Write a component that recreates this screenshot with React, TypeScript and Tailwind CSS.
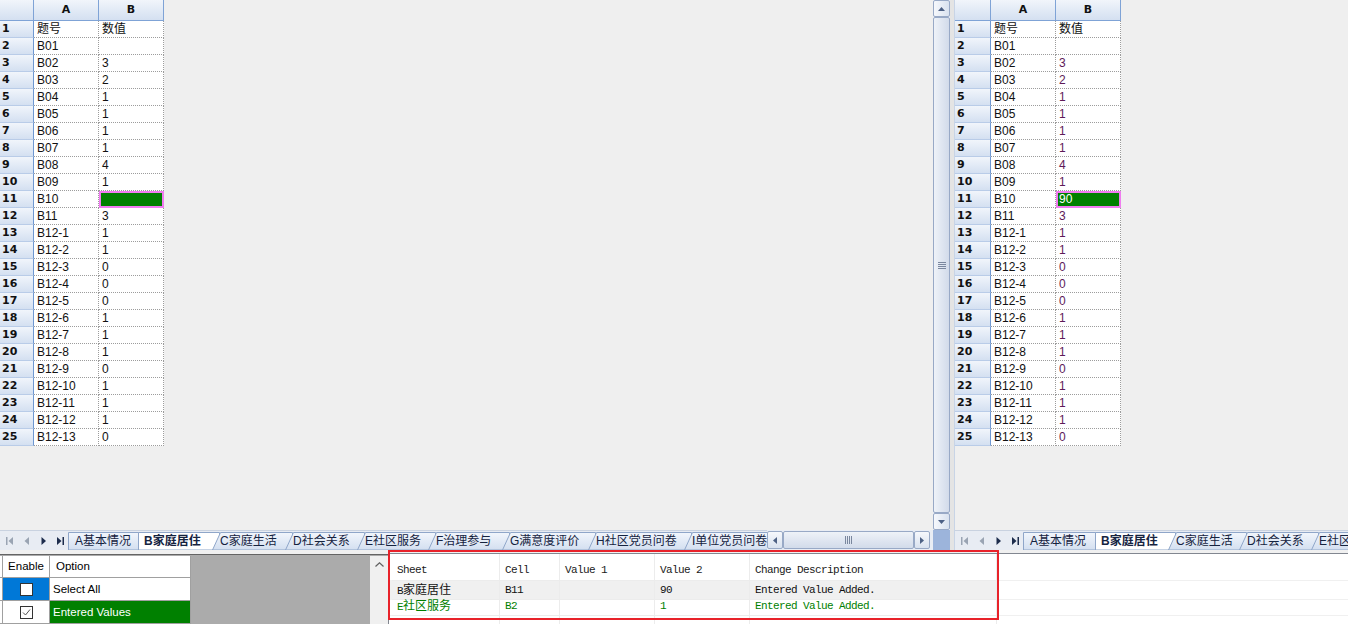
import React from "react";

const DATA: [string, string][] = [
  ["题号", "数值"], ["B01", ""], ["B02", "3"], ["B03", "2"], ["B04", "1"], ["B05", "1"],
  ["B06", "1"], ["B07", "1"], ["B08", "4"], ["B09", "1"], ["B10", "__SEL__"], ["B11", "3"],
  ["B12-1", "1"], ["B12-2", "1"], ["B12-3", "0"], ["B12-4", "0"], ["B12-5", "0"], ["B12-6", "1"],
  ["B12-7", "1"], ["B12-8", "1"], ["B12-9", "0"], ["B12-10", "1"], ["B12-11", "1"], ["B12-12", "1"],
  ["B12-13", "0"],
];

const CELL =
  "font-['Liberation_Sans','Noto_Sans_CJK_SC',sans-serif] text-[12px] leading-[16px] flex items-center px-[3px] border-r border-b border-dotted border-[#9c9c9c] bg-white whitespace-nowrap overflow-hidden";
const HEAD =
  "font-['DejaVu_Sans',sans-serif] font-bold text-[11px] text-[#111] bg-linear-to-b from-[#f1f5fb] to-[#d4e0f1]";

function Grid({ right }: { right: boolean }) {
  return (
    <div
      className={
        right
          ? "grid grid-cols-[36px_65px_65px] grid-rows-[21px_repeat(25,17px)] w-max"
          : "grid grid-cols-[34px_65px_65px] grid-rows-[21px_repeat(25,17px)] w-max"
      }
    >
      <div className={HEAD + " border-r border-b border-[#7fa3d6]"} />
      {["A", "B"].map((c) => (
        <div key={c} className={HEAD + " border-r border-b border-[#7fa3d6] flex items-center justify-center"}>
          {c}
        </div>
      ))}
      {DATA.map(([a, b], i) => (
        <React.Fragment key={i}>
          <div
            className={
              HEAD +
              " border-r border-r-[#6f98d2] border-b border-b-[#b9cce8] flex items-center pl-[2px] leading-[16px]"
            }
          >
            {i + 1}
          </div>
          <div className={CELL + " text-[#111]"}>{a}</div>
          {b === "__SEL__" ? (
            <div className="border-2 border-[#f07cf0] bg-[#008000] text-white font-['Liberation_Sans',sans-serif] text-[12px] leading-[13px] flex items-center pl-[1px]">
              {right ? "90" : ""}
            </div>
          ) : (
            <div className={CELL + (right && i > 0 ? " text-[#5e1a58]" : " text-[#111]")}>{b}</div>
          )}
        </React.Fragment>
      ))}
    </div>
  );
}

function VScroll() {
  return (
    <div className="w-[17px] h-full flex flex-col bg-[#e9edf4]">
      <div className="h-[17px] rounded-[2px] border border-[#98a9c6] bg-linear-to-r from-[#f6f8fc] to-[#d9e2ef] flex items-center justify-center">
        <svg width="7" height="4">
          <polygon points="0,4 3.5,0 7,4" fill="#4d6185" />
        </svg>
      </div>
      <div className="flex-1 rounded-[2px] border border-[#98a9c6] bg-linear-to-r from-[#eef2f8] to-[#d2dbea] flex items-center justify-center">
        <svg width="8" height="9">
          {[0, 2, 4, 6].map((y) => (
            <rect key={y} x="0" y={y + 1} width="8" height="1" fill="#7a879e" />
          ))}
        </svg>
      </div>
      <div className="h-[17px] rounded-[2px] border border-[#98a9c6] bg-linear-to-r from-[#f6f8fc] to-[#d9e2ef] flex items-center justify-center">
        <svg width="7" height="4">
          <polygon points="0,0 3.5,4 7,0" fill="#4d6185" />
        </svg>
      </div>
    </div>
  );
}

function HScroll() {
  return (
    <div className="w-[166px] h-full flex bg-[#e9edf4] pr-[3px] py-[1px]">
      <div className="w-[16px] rounded-[2px] border border-[#98a9c6] bg-linear-to-b from-[#f6f8fc] to-[#d9e2ef] flex items-center justify-center">
        <svg width="4" height="7">
          <polygon points="4,0 0,3.5 4,7" fill="#4d6185" />
        </svg>
      </div>
      <div className="flex-1 rounded-[2px] border border-[#98a9c6] bg-linear-to-b from-[#eef2f8] to-[#d2dbea] flex items-center justify-center">
        <svg width="9" height="8">
          {[0, 2, 4, 6].map((x) => (
            <rect key={x} x={x + 1} y="0" width="1" height="8" fill="#7a879e" />
          ))}
        </svg>
      </div>
      <div className="w-[16px] rounded-[2px] border border-[#98a9c6] bg-linear-to-b from-[#f6f8fc] to-[#d9e2ef] flex items-center justify-center">
        <svg width="4" height="7">
          <polygon points="0,0 4,3.5 0,7" fill="#4d6185" />
        </svg>
      </div>
    </div>
  );
}

type Tab = { label: string; w: number };

function TabShape({ w, kind, id }: { w: number; kind: "first" | "active" | "slant"; id: string }) {
  const h = 18;
  const pts =
    kind === "slant"
      ? `0.5,${h} 8.5,0.5 ${w - 0.5},0.5 ${w - 0.5},${h}`
      : `0.5,${h} 0.5,0.5 ${w - 0.5},0.5 ${w - 0.5},${h}`;
  return (
    <svg className="absolute left-0 top-0" width={w} height={h}>
      <defs>
        <linearGradient id={id} x1="0" y1="0" x2="0" y2="1">
          <stop offset="0" stopColor="#f2f6fc" />
          <stop offset="1" stopColor="#d3dff0" />
        </linearGradient>
      </defs>
      <polygon points={pts} fill={kind === "active" ? "#ffffff" : `url(#${id})`} stroke="#8fa6c9" strokeWidth="1" />
    </svg>
  );
}

function NavIcons() {
  return (
    <div className="w-[68px] shrink-0 h-full flex items-center pl-[6px] gap-[10px]">
      <svg width="7" height="8">
        <rect x="0" y="0" width="1.5" height="8" fill="#9aa4b3" />
        <polygon points="7,0 2.5,4 7,8" fill="#9aa4b3" />
      </svg>
      <svg width="7" height="8">
        <polygon points="6,0 1.5,4 6,8" fill="#9aa4b3" />
      </svg>
      <svg width="7" height="8">
        <polygon points="1.5,0 6,4 1.5,8" fill="#1d2c4c" />
      </svg>
      <svg width="7" height="8">
        <polygon points="0,0 4.5,4 0,8" fill="#1d2c4c" />
        <rect x="5.5" y="0" width="1.5" height="8" fill="#1d2c4c" />
      </svg>
    </div>
  );
}

function TabBar({ tabs, cls, pfx }: { tabs: Tab[]; cls: string; pfx: string }) {
  return (
    <div className={cls + " h-full flex bg-[#e8ecf3] border-t border-[#c9d2e0] overflow-hidden"}>
      <NavIcons />
      <div className="flex pt-[1px]">
        {tabs.map((t, i) => {
          const kind = i === 0 ? "first" : i === 1 ? "active" : "slant";
          const last = i === tabs.length - 1;
          return (
            <div key={i} className="relative shrink-0 h-[18px]" style={{ width: t.w }}>
              <TabShape w={t.w + (last ? 0 : 8)} kind={kind} id={`${pfx}g${i}`} />
              <div
                className={
                  "relative whitespace-nowrap font-['Liberation_Sans','Noto_Sans_CJK_SC',sans-serif] text-[12px] leading-[18px] text-[#15233f] " +
                  (kind === "active" ? "font-bold pl-[6px]" : kind === "slant" ? "pl-[8px]" : "pl-[7px]")
                }
              >
                {t.label}
              </div>
            </div>
          );
        })}
      </div>
    </div>
  );
}

const LEFT_TABS: Tab[] = [
  { label: "A基本情况", w: 70 },
  { label: "B家庭居住", w: 74 },
  { label: "C家庭生活", w: 73 },
  { label: "D社会关系", w: 72 },
  { label: "E社区服务", w: 71 },
  { label: "F治理参与", w: 74 },
  { label: "G满意度评价", w: 86 },
  { label: "H社区党员问卷", w: 96 },
  { label: "I单位党员问卷", w: 100 },
];

const RIGHT_TABS: Tab[] = [
  { label: "A基本情况", w: 72 },
  { label: "B家庭居住", w: 73 },
  { label: "C家庭生活", w: 71 },
  { label: "D社会关系", w: 72 },
  { label: "E社区服务", w: 80 },
];

function CheckBox({ checked }: { checked: boolean }) {
  return (
    <svg width="13" height="13">
      <rect x="0.5" y="0.5" width="12" height="12" fill="#ffffff" stroke="#333333" />
      {checked && <polyline points="3,6.5 5.5,9 10,3.5" fill="none" stroke="#555" strokeWidth="1" />}
    </svg>
  );
}

const DGV = "font-['Liberation_Sans',sans-serif] text-[11.5px] text-black border-r border-b border-[#a0a0a0] flex items-center";
const MONO = "font-['Liberation_Mono','Noto_Sans_CJK_SC',monospace] text-[11px] tracking-[-0.6px] leading-[14px]";
const LV_COLS = "grid grid-cols-[3px_108px_60px_95px_95px_247px_1fr]";

function Mixed({ s }: { s: string }) {
  const parts = s.split(/([\u4e00-\u9fff]+)/).filter((p) => p.length > 0);
  return (
    <span className="block leading-[16px]">
      {parts.map((p, i) =>
        /[\u4e00-\u9fff]/.test(p) ? (
          <span key={i} className="text-[12px] tracking-normal font-['Noto_Sans_CJK_SC',sans-serif]">
            {p}
          </span>
        ) : (
          <span key={i}>{p}</span>
        )
      )}
    </span>
  );
}

function LvRow({ cells, cls, h, bg }: { cells: string[]; cls: string; h: string; bg?: string }) {
  return (
    <div className={LV_COLS + " " + h}>
      <div className={(bg || "") + " border-b border-[#f0f0f0]"} />
      {cells.map((c, i) => (
        <div
          key={i}
          className={
            MONO +
            " " +
            cls +
            " " +
            (bg || "") +
            " flex items-center pl-[5px] whitespace-nowrap border-r border-b border-[#ececec]"
          }
        >
          <Mixed s={c} />
        </div>
      ))}
      <div className="border-b border-[#f0f0f0]" />
    </div>
  );
}

export default function App() {
  return (
    <div className="w-[1348px] h-[624px] bg-[#f0f0f0] flex flex-col overflow-hidden">
      <div className="h-[550px] flex">
        <div className="w-[950px] flex flex-col shrink-0">
          <div className="h-[530px] flex">
            <div className="w-[933px] h-full overflow-hidden bg-[#efefef]">
              <Grid right={false} />
            </div>
            <VScroll />
          </div>
          <div className="h-[20px] flex">
            <TabBar tabs={LEFT_TABS} cls="w-[767px]" pfx="l" />
            <HScroll />
            <div className="w-[17px] bg-[#9cb4db]" />
          </div>
        </div>
        <div className="w-[5px] shrink-0 bg-[#e4e4e4] border-r border-[#c8d4e6]" />
        <div className="flex-1 flex flex-col min-w-0">
          <div className="h-[530px] overflow-hidden bg-[#efefef]">
            <Grid right />
          </div>
          <div className="h-[20px] flex overflow-hidden">
            <TabBar tabs={RIGHT_TABS} cls="flex-1" pfx="r" />
          </div>
        </div>
      </div>

      <div className="h-[74px] relative flex pt-[3px]">
        <div className="w-[388px] h-full flex flex-col border-t border-[#646464] bg-[#ababab] shrink-0 mt-[1px]">
          <div className="flex-1 flex pt-[1px]">
            <div className="w-[370px] flex items-start">
              <div className="grid grid-cols-[3px_47px_141px] grid-rows-[22px_23px_23px] bg-white">
                <div className="border-r border-b border-[#a0a0a0]" />
                <div className={DGV + " justify-center pt-[1px]"}>Enable</div>
                <div className={DGV + " pl-[6px] pt-[1px]"}>Option</div>
                <div className="border-r border-b border-[#a0a0a0]" />
                <div className={DGV + " justify-center bg-[#0078d7]"}>
                  <CheckBox checked={false} />
                </div>
                <div className={DGV + " pl-[3px] pt-[1px]"}>Select All</div>
                <div className="border-r border-b border-[#a0a0a0]" />
                <div className={DGV + " justify-center"}>
                  <CheckBox checked />
                </div>
                <div className={DGV + " pl-[3px] pt-[1px] bg-[#008000] text-white"}>Entered Values</div>
              </div>
            </div>
            <div className="w-[18px] bg-[#f0f0f0] flex justify-center pt-[6px]">
              <svg width="9" height="5">
                <polyline points="0.5,4.5 4.5,0.8 8.5,4.5" fill="none" stroke="#606060" strokeWidth="1.2" />
              </svg>
            </div>
          </div>
        </div>

        <div className="flex-1 h-full bg-white border-l border-t border-[#828790] overflow-hidden">
          <LvRow
            cells={["Sheet", "Cell", "Value 1", "Value 2", "Change Description"]}
            cls="text-[#1a1a1a] pt-[5px]"
            h="h-[27px]"
          />
          <LvRow
            cells={["B家庭居住", "B11", "", "90", "Entered Value Added."]}
            cls="text-[#111]"
            h="h-[16px]"
            bg="bg-[#f0f0f0]"
          />
          <LvRow cells={["E社区服务", "B2", "", "1", "Entered Value Added."]} cls="text-[#008000]" h="h-[16px]" />
          <LvRow cells={["", "", "", "", ""]} cls="" h="h-[16px]" />
        </div>

        <div className="absolute left-[388px] top-0 w-[611px] h-[70px] border-2 border-[#e8222a] pointer-events-none" />
      </div>
    </div>
  );
}
